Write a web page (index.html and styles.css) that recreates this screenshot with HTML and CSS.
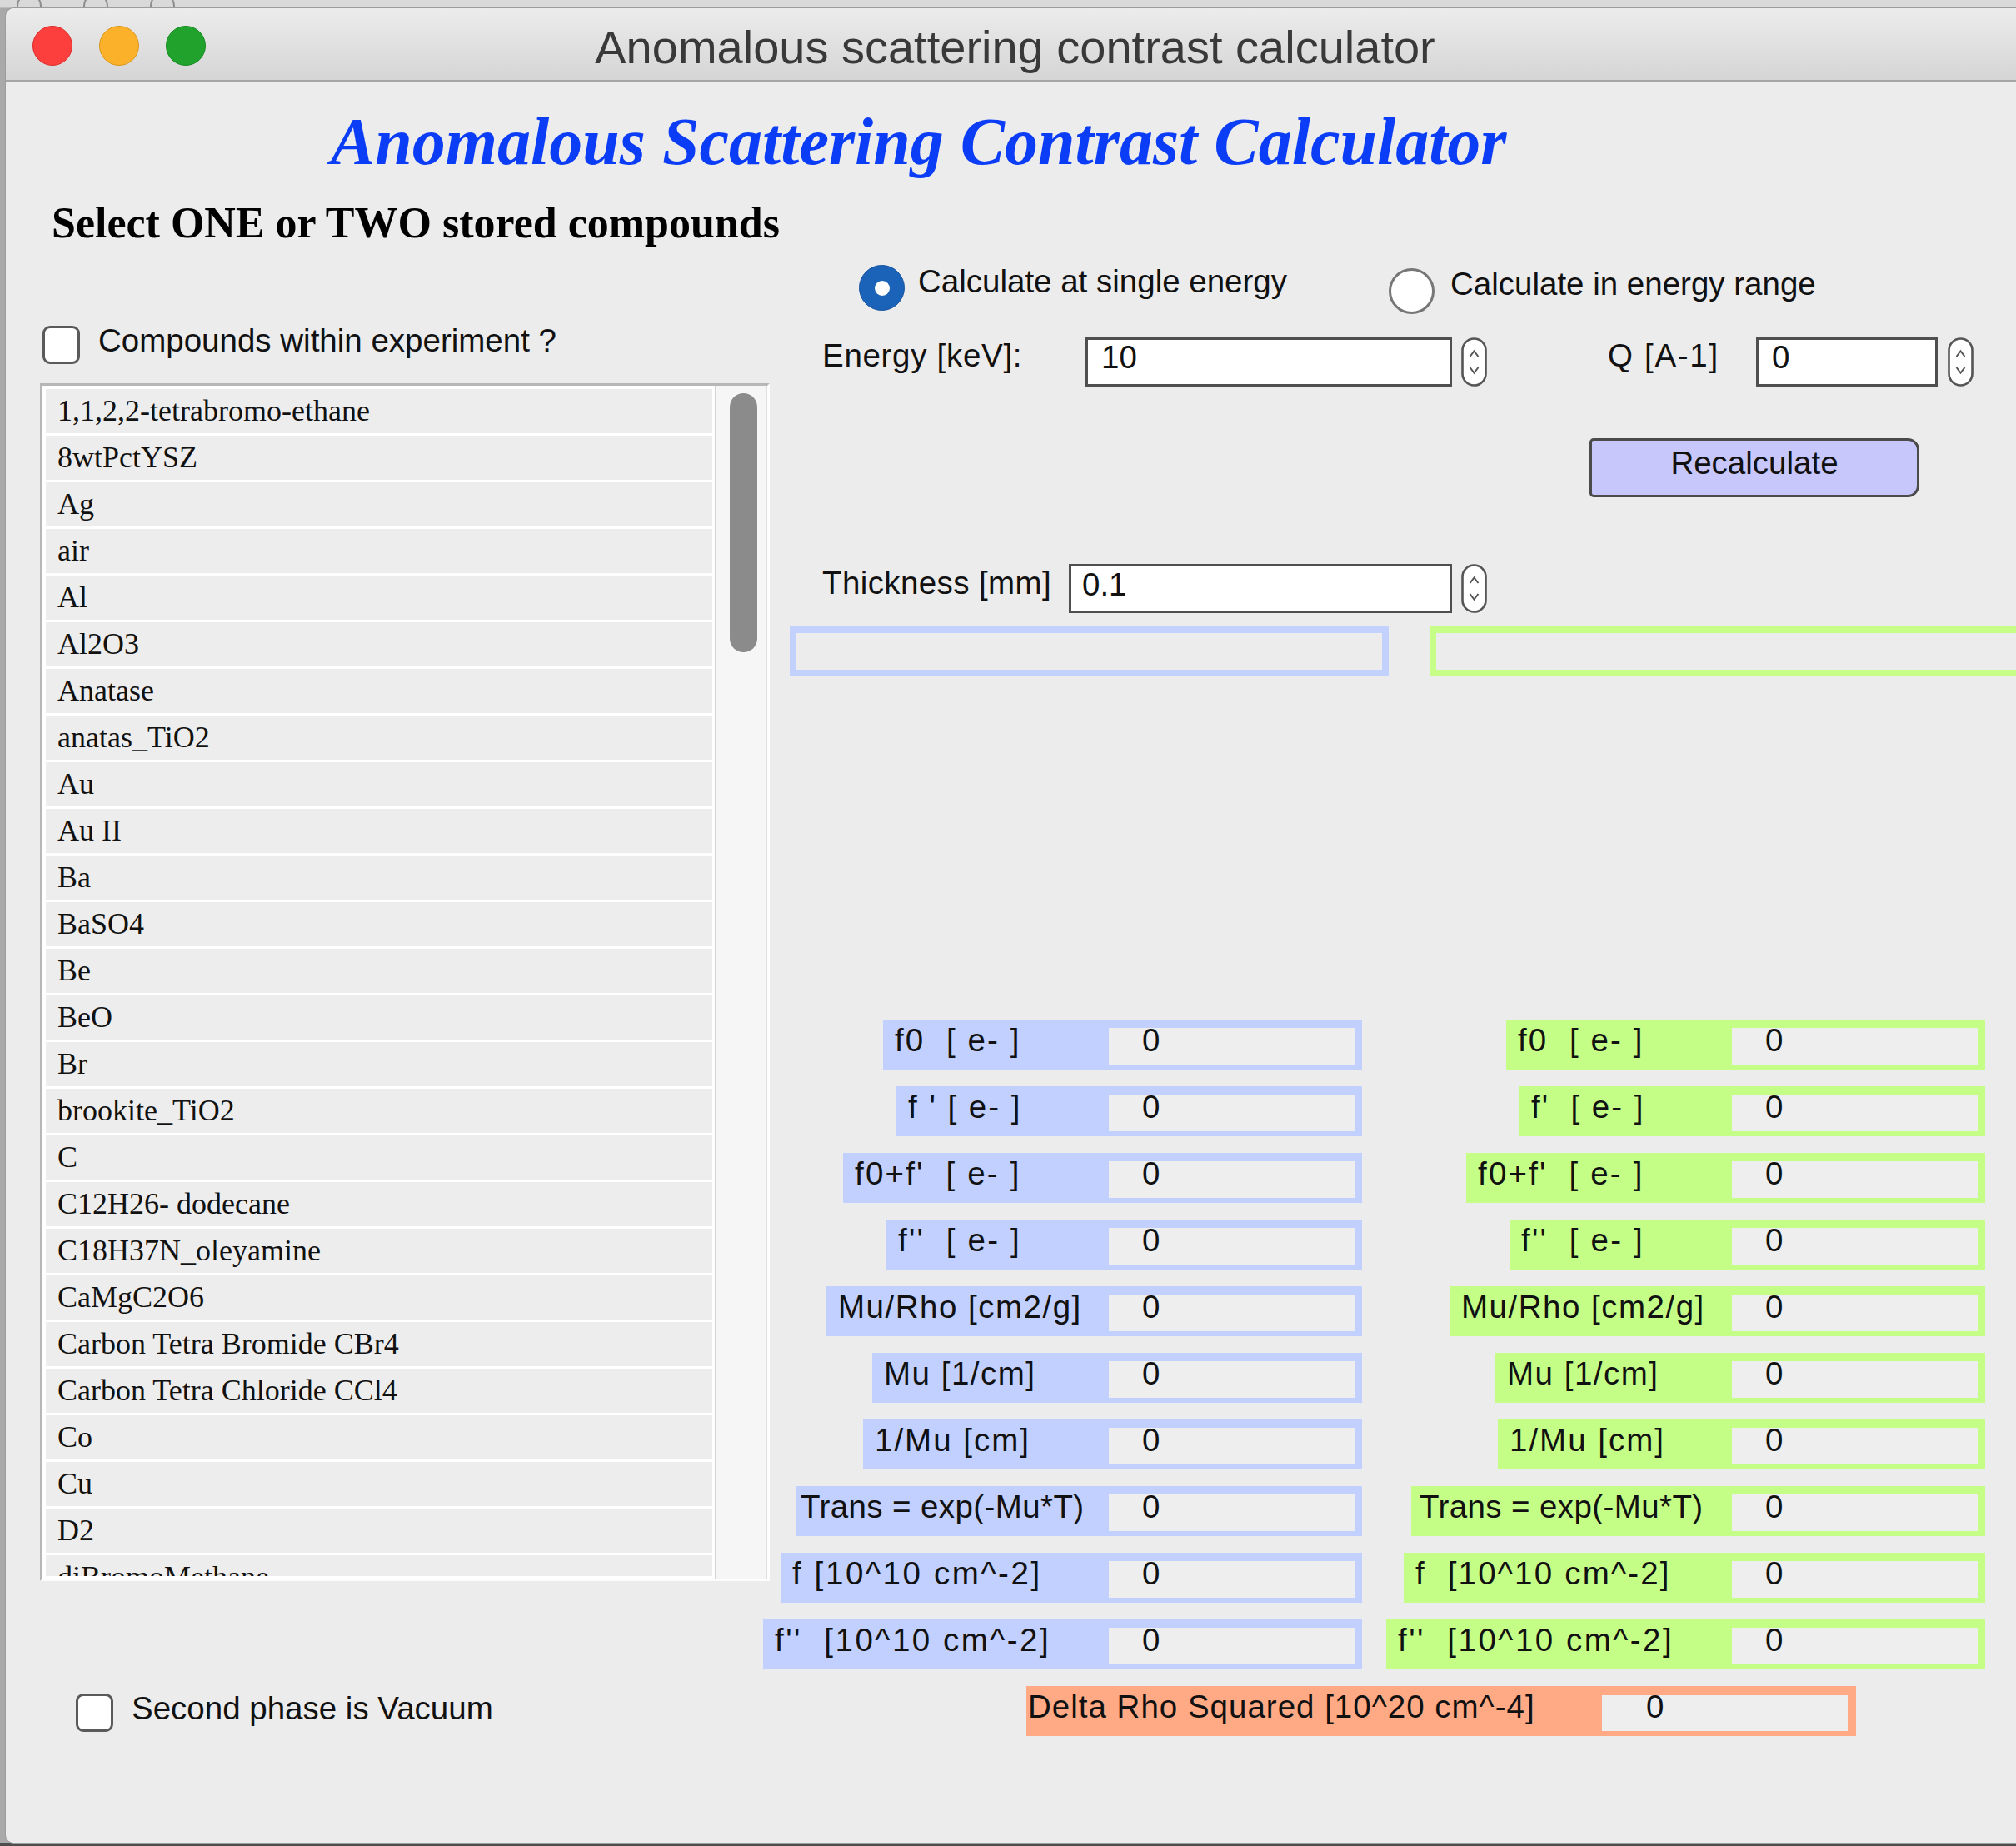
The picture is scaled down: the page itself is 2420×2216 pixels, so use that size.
FILE: index.html
```html
<!DOCTYPE html>
<html>
<head>
<meta charset="utf-8">
<title>Anomalous scattering contrast calculator</title>
<link rel="stylesheet" href="styles.css">
</head>
<body>
<div class="desktop">
  <div class="bgwin">
    <span class="ghost"></span><span class="ghost"></span><span class="ghost"></span>
  </div>
  <div class="window">
    <div class="titlebar">
      <div class="lights">
        <span class="light red"></span>
        <span class="light yellow"></span>
        <span class="light green"></span>
      </div>
      <div class="wtitle">Anomalous scattering contrast calculator</div>
    </div>
    <div class="content">
      <h1 class="apptitle">Anomalous Scattering Contrast Calculator</h1>
      <div class="columns">
        <div class="leftcol">
          <h2 class="select">Select ONE or TWO stored compounds</h2>
          <div class="check exp"><span class="box"></span><span class="ctext">Compounds within experiment ?</span></div>
          <div class="list">
            <div class="rows">
              <div class="item">1,1,2,2-tetrabromo-ethane</div>
              <div class="item">8wtPctYSZ</div>
              <div class="item">Ag</div>
              <div class="item">air</div>
              <div class="item">Al</div>
              <div class="item">Al2O3</div>
              <div class="item">Anatase</div>
              <div class="item">anatas_TiO2</div>
              <div class="item">Au</div>
              <div class="item">Au II</div>
              <div class="item">Ba</div>
              <div class="item">BaSO4</div>
              <div class="item">Be</div>
              <div class="item">BeO</div>
              <div class="item">Br</div>
              <div class="item">brookite_TiO2</div>
              <div class="item">C</div>
              <div class="item">C12H26- dodecane</div>
              <div class="item">C18H37N_oleyamine</div>
              <div class="item">CaMgC2O6</div>
              <div class="item">Carbon Tetra Bromide CBr4</div>
              <div class="item">Carbon Tetra Chloride CCl4</div>
              <div class="item">Co</div>
              <div class="item">Cu</div>
              <div class="item">D2</div>
              <div class="item">diBromoMethane</div>
            </div>
            <div class="track"><div class="thumb"></div></div>
          </div>
          <div class="check vac"><span class="box"></span><span class="ctext">Second phase is Vacuum</span></div>
        </div>

        <div class="rightcol">
          <div class="radios">
            <div class="ritem r1"><span class="radio on"><span class="dot"></span></span><span class="rlabel">Calculate at single energy</span></div>
            <div class="ritem r2"><span class="radio off"></span><span class="rlabel">Calculate in energy range</span></div>
          </div>

          <div class="frow energy">
            <span class="flabel elabel">Energy [keV]:</span>
            <div class="input ewide"><span class="itext">10</span></div>
            <svg class="spin" viewBox="0 0 31 59" width="31" height="59"><rect x="1.5" y="1.5" width="28" height="56" rx="14" fill="#fff" stroke="#555" stroke-width="2.6"/><polyline points="10.5,23 15.5,16.5 20.5,23" fill="none" stroke="#555" stroke-width="2"/><polyline points="10.5,36 15.5,42.5 20.5,36" fill="none" stroke="#555" stroke-width="2"/></svg>
            <span class="flabel qlabel">Q [A-1]</span>
            <div class="input qwide"><span class="itext">0</span></div>
            <svg class="spin" viewBox="0 0 31 59" width="31" height="59"><rect x="1.5" y="1.5" width="28" height="56" rx="14" fill="#fff" stroke="#555" stroke-width="2.6"/><polyline points="10.5,23 15.5,16.5 20.5,23" fill="none" stroke="#555" stroke-width="2"/><polyline points="10.5,36 15.5,42.5 20.5,36" fill="none" stroke="#555" stroke-width="2"/></svg>
          </div>

          <div class="recalc"><span>Recalculate</span></div>

          <div class="frow thick">
            <span class="flabel tlabel">Thickness [mm]</span>
            <div class="input twide"><span class="itext">0.1</span></div>
            <svg class="spin" viewBox="0 0 31 59" width="31" height="59"><rect x="1.5" y="1.5" width="28" height="56" rx="14" fill="#fff" stroke="#555" stroke-width="2.6"/><polyline points="10.5,23 15.5,16.5 20.5,23" fill="none" stroke="#555" stroke-width="2"/><polyline points="10.5,36 15.5,42.5 20.5,36" fill="none" stroke="#555" stroke-width="2"/></svg>
          </div>

          <div class="oboxes">
            <div class="obox oblue"></div>
            <div class="obox ogreen"></div>
          </div>

          <div class="results">
            <div class="rescol cblue">
              <div class="rrow"><span class="rlab l1">f0  [ e- ]</span><span class="rval">0</span></div>
              <div class="rrow"><span class="rlab l2">f ' [ e- ]</span><span class="rval">0</span></div>
              <div class="rrow"><span class="rlab l3">f0+f'  [ e- ]</span><span class="rval">0</span></div>
              <div class="rrow"><span class="rlab l4">f''  [ e- ]</span><span class="rval">0</span></div>
              <div class="rrow"><span class="rlab l5">Mu/Rho [cm2/g]</span><span class="rval">0</span></div>
              <div class="rrow"><span class="rlab l6">Mu [1/cm]</span><span class="rval">0</span></div>
              <div class="rrow"><span class="rlab l7">1/Mu [cm]</span><span class="rval">0</span></div>
              <div class="rrow"><span class="rlab l8">Trans = exp(-Mu*T)</span><span class="rval">0</span></div>
              <div class="rrow"><span class="rlab l9">f [10^10 cm^-2]</span><span class="rval">0</span></div>
              <div class="rrow"><span class="rlab l10">f''  [10^10 cm^-2]</span><span class="rval">0</span></div>
            </div>
            <div class="rescol cgreen">
              <div class="rrow"><span class="rlab l1">f0  [ e- ]</span><span class="rval">0</span></div>
              <div class="rrow"><span class="rlab l2">f'  [ e- ]</span><span class="rval">0</span></div>
              <div class="rrow"><span class="rlab l3">f0+f'  [ e- ]</span><span class="rval">0</span></div>
              <div class="rrow"><span class="rlab l4">f''  [ e- ]</span><span class="rval">0</span></div>
              <div class="rrow"><span class="rlab l5">Mu/Rho [cm2/g]</span><span class="rval">0</span></div>
              <div class="rrow"><span class="rlab l6">Mu [1/cm]</span><span class="rval">0</span></div>
              <div class="rrow"><span class="rlab l7">1/Mu [cm]</span><span class="rval">0</span></div>
              <div class="rrow"><span class="rlab l8">Trans = exp(-Mu*T)</span><span class="rval">0</span></div>
              <div class="rrow"><span class="rlab l9">f  [10^10 cm^-2]</span><span class="rval">0</span></div>
              <div class="rrow"><span class="rlab l10">f''  [10^10 cm^-2]</span><span class="rval">0</span></div>
            </div>
          </div>

          <div class="delta"><span class="dlab">Delta Rho Squared [10^20 cm^-4]</span><span class="dval">0</span></div>
        </div>
      </div>
    </div>
  </div>
</div>
</body>
</html>
```

FILE: styles.css
```css
* { box-sizing: border-box; }
html, body {
  margin: 0;
  padding: 0;
  width: 2420px;
  height: 2216px;
  overflow: hidden;
  font-family: "Liberation Sans", Arial, sans-serif;
}
.desktop {
  position: relative;
  width: 2420px;
  height: 2216px;
  background: linear-gradient(to bottom, #d9d9d9 0, #d9d9d9 10px, #a9a9a9 10px, #a9a9a9 2212px, #4d4d4d 2212px);
}
.bgwin {
  position: absolute;
  left: 0;
  top: 0;
  width: 2420px;
  height: 10px;
  overflow: hidden;
  display: flex;
  gap: 50px;
  padding-left: 20px;
  border-bottom: 1px solid #bdbdbd;
}
.ghost {
  width: 30px;
  height: 30px;
  margin-top: -8px;
  border-radius: 50%;
  border: 2px solid #8d8d8d;
  flex: none;
}
.window {
  position: absolute;
  left: 7px;
  top: 10px;
  width: 2423px;
  height: 2202px;
  background: #ececec;
  border-radius: 10px 10px 9px 9px;
  overflow: hidden;
  box-shadow: 0 0 0 1px #9c9c9c;
}
.titlebar {
  position: relative;
  height: 88px;
  border-bottom: 2px solid #a6a6a6;
  background: linear-gradient(to bottom, #ececec, #d5d5d5);
  display: flex;
  align-items: center;
  justify-content: center;
}
.lights {
  position: absolute;
  left: 32px;
  top: 21px;
  display: flex;
  gap: 32px;
}
.light {
  width: 48px;
  height: 48px;
  border-radius: 50%;
}
.light.red { background: #fc3f3c; border: 1px solid #dd2c2a; }
.light.yellow { background: #fbb22a; border: 1px solid #d9961c; }
.light.green { background: #20a22d; border: 1px solid #168c22; }
.wtitle {
  font-size: 56px;
  line-height: 60px;
  margin-top: 8px;
  color: #393939;
  white-space: nowrap;
}
.apptitle {
  margin: 0;
  padding: 22px 0 0 390px;
  font-family: "Liberation Serif", "Times New Roman", serif;
  font-style: italic;
  font-weight: bold;
  font-size: 80px;
  line-height: 100px;
  color: #0b3cf6;
  white-space: nowrap;
}
.columns {
  display: flex;
  align-items: flex-start;
  margin-left: 41px;
}
.leftcol {
  width: 876px;
  flex: none;
}
.select {
  margin: 18px 0 0 14px;
  font-family: "Liberation Serif", "Times New Roman", serif;
  font-weight: bold;
  font-size: 52px;
  line-height: 60px;
  color: #000;
  white-space: nowrap;
}
.check {
  display: flex;
  align-items: center;
  height: 47px;
  font-size: 38.5px;
  color: #111;
}
.check.exp { margin: 92px 0 0 3px; }
.check.vac { margin: 134px 0 0 43px; }
.box {
  width: 45px;
  height: 46px;
  border: 3px solid #5a5a5a;
  border-radius: 9px;
  background: #fff;
  margin-right: 22px;
  flex: none;
}
.ctext {
  line-height: 47px;
  margin-bottom: 10px;
  white-space: nowrap;
}
.list {
  margin-top: 23px;
  width: 876px;
  height: 1438px;
  border: 3px solid;
  border-color: #b7b7b7 #fdfdfd #fdfdfd #b7b7b7;
  background: #fff;
  display: flex;
}
.rows {
  flex: 1;
  margin: 4px 3px 3px 4px;
  overflow: hidden;
}
.item {
  height: 53px;
  margin-bottom: 3px;
  background: #ededed;
  padding-left: 14px;
  font-family: "Liberation Serif", "Times New Roman", serif;
  font-size: 36px;
  line-height: 53px;
  color: #111;
  white-space: nowrap;
}
.track {
  width: 63px;
  flex: none;
  background: #f6f6f6;
  border-left: 2px solid #d5d5d5;
  border-right: 2px solid #e0e0e0;
  padding: 9px 0 0 16px;
}
.thumb {
  width: 33px;
  height: 311px;
  border-radius: 17px;
  background: #8b8b8b;
}
.rightcol {
  margin-left: 24px;
  flex: 1;
  min-width: 0;
}
.radios {
  display: flex;
  align-items: flex-start;
  height: 61px;
  margin-top: 96px;
}
.ritem {
  display: flex;
  align-items: center;
  height: 55px;
  font-size: 38.5px;
  color: #111;
  white-space: nowrap;
}
.ritem.r1 { margin: 2px 0 0 83px; width: 636px; flex: none; }
.ritem.r2 { margin-top: 6px; }
.radio {
  width: 55px;
  height: 55px;
  border-radius: 50%;
  flex: none;
  display: flex;
  align-items: center;
  justify-content: center;
}
.radio.on { background: #1b62b9; border: 1px solid #14539f; margin-right: 16px; }
.radio.off { background: #fff; border: 3px solid #777; margin-right: 19px; }
.dot {
  width: 18px;
  height: 18px;
  border-radius: 50%;
  background: #fff;
}
.r1 .rlabel { line-height: 55px; margin-bottom: 16px; }
.r2 .rlabel { line-height: 55px; margin-bottom: 18px; }
.frow {
  display: flex;
  align-items: center;
  height: 61px;
  font-size: 38.5px;
  color: #111;
}
.frow.energy { margin-top: 27px; }
.frow.thick { margin-top: 79px; }
.flabel {
  flex: none;
  line-height: 50px;
  white-space: nowrap;
}
.elabel { width: 316px; margin-left: 39px; margin-bottom: 15px; letter-spacing: 0.7px; }
.qlabel { width: 178px; margin-left: 145px; margin-bottom: 15px; letter-spacing: 1.7px; }
.tlabel { width: 296px; margin-left: 39px; margin-bottom: 13px; letter-spacing: 0.4px; }
.input {
  flex: none;
  height: 59px;
  border: 3px solid #4f4f4f;
  background: #fff;
  line-height: 41px;
  padding-left: 16px;
}
.ewide { width: 440px; }
.qwide { width: 218px; }
.twide { width: 460px; padding-left: 13px; line-height: 43px; }
.spin { flex: none; margin-left: 11px; display: block; }
.qwide + .spin { margin-left: 12px; }
.recalc {
  margin: 61px 0 0 960px;
  width: 396px;
  height: 71px;
  background: #c7c7fb;
  border: 3px solid #4b4b4b;
  border-radius: 5px 14px 14px 5px;
  display: flex;
  align-items: center;
  justify-content: center;
  font-size: 38.5px;
  color: #111;
}
.recalc span { line-height: 50px; margin-bottom: 12px; }
.oboxes {
  display: flex;
  height: 60px;
  margin-top: 15px;
}
.obox { flex: none; height: 60px; }
.oblue { width: 719px; border: 8px solid #c2d1fe; }
.ogreen { width: 800px; margin-left: 49px; border: 8px solid #c6fe88; }
.results {
  display: flex;
  margin-top: 412px;
}
.rescol {
  display: flex;
  flex-direction: column;
  align-items: flex-end;
  gap: 20px;
  flex: none;
}
.cblue { width: 687px; }
.cgreen { width: 748px; }
.rrow {
  display: flex;
  align-items: flex-start;
  height: 60px;
  font-size: 38.5px;
  color: #111;
}
.cblue .rrow { background: #c1d0fe; }
.cgreen .rrow { background: #c5fe86; }
.rlab {
  padding-left: 14px;
  line-height: 50px;
  white-space: pre;
}
.l1 { width: 271px; letter-spacing: 2.1px; }
.l2 { width: 255px; letter-spacing: 2px; }
.l3 { width: 319px; letter-spacing: 2.2px; }
.l4 { width: 267px; letter-spacing: 2.2px; }
.l5 { width: 339px; letter-spacing: 1.5px; }
.l6 { width: 284px; letter-spacing: 1.5px; }
.l7 { width: 295px; letter-spacing: 2px; }
.l8 { width: 375px; padding-left: 5px; letter-spacing: 0.4px; }
.l9 { width: 394px; letter-spacing: 2.6px; }
.l10 { width: 415px; letter-spacing: 2.5px; }
.cgreen .l7 { width: 281px; }
.cgreen .l8 { width: 385px; padding-left: 10px; }
.cgreen .l9 { letter-spacing: 2.2px; }
.rval {
  width: 295px;
  height: 44px;
  margin: 10px 9px 0 0;
  background: #eeeeee;
  padding-left: 40px;
  line-height: 30px;
}
.delta {
  display: flex;
  align-items: flex-start;
  width: 996px;
  height: 60px;
  margin: 20px 0 0 284px;
  background: #ffaa85;
  font-size: 38.5px;
  color: #111;
}
.dlab {
  width: 691px;
  padding-left: 2px;
  line-height: 50px;
  white-space: pre;
  letter-spacing: 1px;
}
.dval {
  width: 295px;
  height: 43px;
  margin-top: 11px;
  background: #eeeeee;
  padding-left: 53px;
  line-height: 28px;
}
```
